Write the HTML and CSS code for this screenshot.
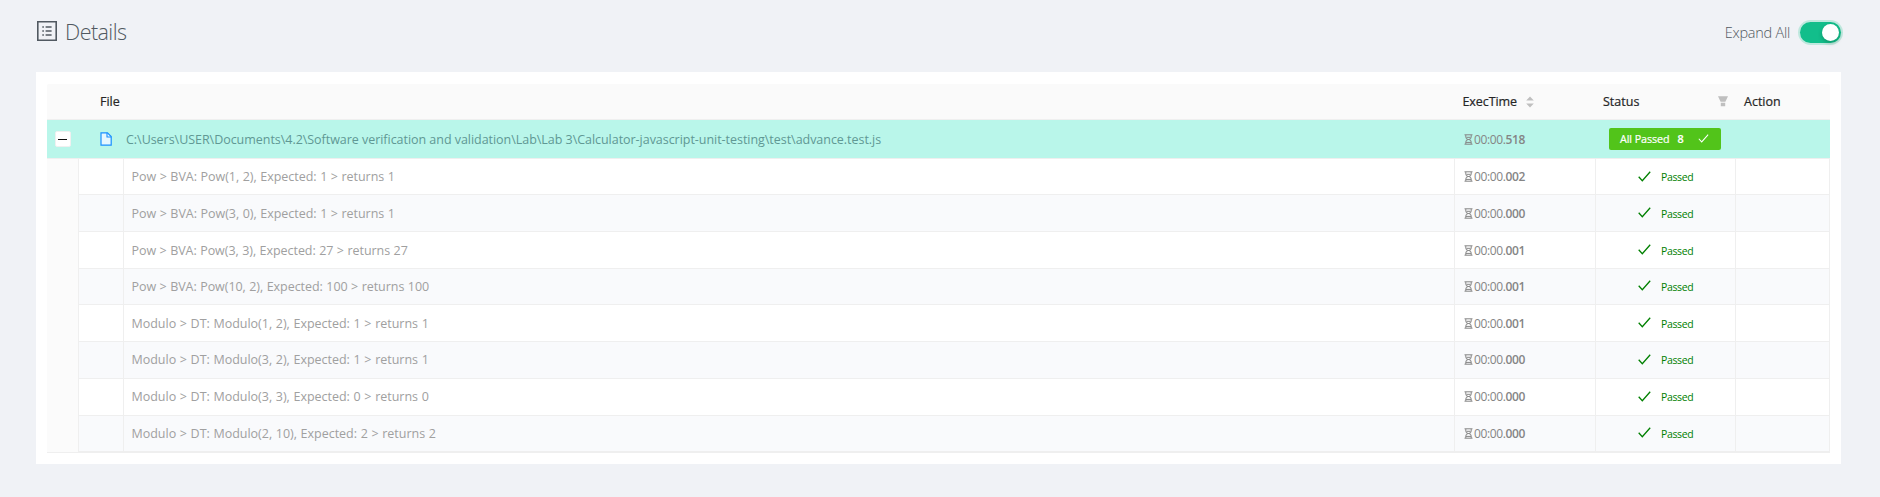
FILE: index.html
```html
<!DOCTYPE html>
<html lang="en">
<head>
<meta charset="utf-8">
<title>Details</title>
<link rel="stylesheet" href="styles.css">
</head>
<body>
<svg class="defs" width="0" height="0">
  <symbol id="check" viewBox="0 0 13 11"><path d="M.7 5.8 4.3 9.7 12.2.8" fill="none" stroke="currentColor" stroke-width="1.3"/></symbol>
  <symbol id="glass" viewBox="0 0 9 11"><path d="M.5 .8h8M.5 10.2h8M1.8 1v2Q1.8 5.5 4.5 5.5Q7.2 5.5 7.2 3V1M1.8 10V8Q1.8 5.5 4.5 5.5Q7.2 5.5 7.2 8v2M2 8.4h5M2.5 3.3h4" fill="none" stroke="currentColor" stroke-width="1"/></symbol>
</svg>
<header class="top">
  <svg class="list-icon" viewBox="0 0 20 20"><path d="M.8.8h18.4v18.4H.8z" fill="none" stroke="currentColor" stroke-width="1.6"/><path d="M5.3 6h1.6M5.3 10h1.6M5.3 14h1.6M8.6 6h6M8.6 10h6M8.6 14h6" stroke="currentColor" stroke-width="1.4"/></svg>
  <h1 class="title">Details</h1>
  <span class="expand">Expand All</span>
  <span class="switch"><span class="knob"></span></span>
</header>
<main class="panel">
  <div class="row head">
    <span class="h-file">File</span>
    <span class="h-exec">ExecTime<svg class="sort" viewBox="0 0 8 12"><path d="M4 .5 7.8 4.5H.2zM4 11.5.2 7.5h7.6z" fill="currentColor"/></svg></span>
    <span class="h-status">Status<svg class="filter" viewBox="0 0 10 11"><path d="M0 .3h10L7.4 5.7H2.6zM2.8 6.7h4.4v3.6H2.8z" fill="currentColor"/></svg></span>
    <span class="h-action">Action</span>
  </div>
  <div class="row group">
    <span class="toggle"></span>
    <svg class="file" viewBox="0 0 12 14"><path d="M1 .8h6.5L11.2 4.5v8.7H1z" fill="#e6f7ff" stroke="#1890ff" stroke-width="1.2"/><path d="M7 .8v4.2h4.2" fill="none" stroke="#1890ff" stroke-width="1.1"/></svg>
    <span class="path">C:\Users\USER\Documents\4.2\Software verification and validation\Lab\Lab 3\Calculator-javascript-unit-testing\test\advance.test.js</span>
    <span class="g-time time"><svg class="glass"><use href="#glass"/></svg>00:00.<b>518</b></span>
    <span class="badge"><span class="b-text">All Passed</span><span class="b-num">8</span><svg class="b-check" viewBox="0 0 13 11"><use href="#check"/></svg></span>
  </div>
  <div class="nested">
    <div class="test"><span></span><span class="name">Pow &gt; BVA: Pow(1, 2), Expected: 1 &gt; returns 1</span><span class="time"><svg class="glass"><use href="#glass"/></svg>00:00.<b>002</b></span><span class="passed"><svg class="check"><use href="#check"/></svg><em>Passed</em></span><span></span></div>
    <div class="test"><span></span><span class="name">Pow &gt; BVA: Pow(3, 0), Expected: 1 &gt; returns 1</span><span class="time"><svg class="glass"><use href="#glass"/></svg>00:00.<b>000</b></span><span class="passed"><svg class="check"><use href="#check"/></svg><em>Passed</em></span><span></span></div>
    <div class="test"><span></span><span class="name">Pow &gt; BVA: Pow(3, 3), Expected: 27 &gt; returns 27</span><span class="time"><svg class="glass"><use href="#glass"/></svg>00:00.<b>001</b></span><span class="passed"><svg class="check"><use href="#check"/></svg><em>Passed</em></span><span></span></div>
    <div class="test"><span></span><span class="name">Pow &gt; BVA: Pow(10, 2), Expected: 100 &gt; returns 100</span><span class="time"><svg class="glass"><use href="#glass"/></svg>00:00.<b>001</b></span><span class="passed"><svg class="check"><use href="#check"/></svg><em>Passed</em></span><span></span></div>
    <div class="test"><span></span><span class="name">Modulo &gt; DT: Modulo(1, 2), Expected: 1 &gt; returns 1</span><span class="time"><svg class="glass"><use href="#glass"/></svg>00:00.<b>001</b></span><span class="passed"><svg class="check"><use href="#check"/></svg><em>Passed</em></span><span></span></div>
    <div class="test"><span></span><span class="name">Modulo &gt; DT: Modulo(3, 2), Expected: 1 &gt; returns 1</span><span class="time"><svg class="glass"><use href="#glass"/></svg>00:00.<b>000</b></span><span class="passed"><svg class="check"><use href="#check"/></svg><em>Passed</em></span><span></span></div>
    <div class="test"><span></span><span class="name">Modulo &gt; DT: Modulo(3, 3), Expected: 0 &gt; returns 0</span><span class="time"><svg class="glass"><use href="#glass"/></svg>00:00.<b>000</b></span><span class="passed"><svg class="check"><use href="#check"/></svg><em>Passed</em></span><span></span></div>
    <div class="test"><span></span><span class="name">Modulo &gt; DT: Modulo(2, 10), Expected: 2 &gt; returns 2</span><span class="time"><svg class="glass"><use href="#glass"/></svg>00:00.<b>000</b></span><span class="passed"><svg class="check"><use href="#check"/></svg><em>Passed</em></span><span></span></div>
  </div>
</main>
</body>
</html>
```

FILE: styles.css
```css
* { box-sizing: border-box; }
body { margin: 0; height: 497px; overflow: hidden; background: #f0f2f6; font-family: "Open Sans", "Noto Sans", sans-serif; font-size: 12.5px; color: #999; white-space: nowrap; }
svg { flex: none; display: block; }
.defs { position: absolute; }
.top { height: 72px; padding: 0 39px 8px 37px; display: flex; align-items: center; color: #515961; }
.list-icon { width: 20px; height: 20px; margin-top: -2px; }
.title { margin: 0 auto 0 8px; font-size: 21.5px; line-height: 30px; font-weight: 300; letter-spacing: -.55px; }
.expand { font-size: 14.5px; font-weight: 300; margin-right: 10px; letter-spacing: -.25px; }
.switch { width: 41px; height: 21px; border-radius: 11px; background: #12be8b; box-shadow: 0 0 0 2px #bfe8de; padding: 2px; display: flex; justify-content: flex-end; }
.knob { width: 17px; height: 17px; border-radius: 50%; background: #fff; box-shadow: 0 2px 4px rgba(0,35,11,.25); }
.panel { width: 1805px; height: 392px; margin-left: 36px; padding: 12px 11px 11px; background: #fff; }
.row { display: grid; align-items: center; }
.head { height: 36px; grid-template-columns: 53px 1362.5px 140.5px 141px 86px; background: #fafafa; border-bottom: 1px solid #efefef; color: #262626; font-weight: 500; -webkit-text-stroke: .2px #262626; border-radius: 2px 2px 0 0; }
.h-file { grid-column: 2; }
.h-exec, .h-status { display: flex; align-items: center; }
.h-exec { letter-spacing: -.08px; }
.sort { width: 8px; height: 12px; margin-left: 9px; margin-top: 1px; color: #bfbfbf; }
.filter { width: 10px; height: 11px; margin-left: auto; margin-right: 16px; color: #bfbfbf; }
.group { height: 39px; grid-template-columns: 8px 45px 26px 1337px 146px 112px; background: #b9f6ea; border-bottom: 1px solid #efefef; color: #609894; }
.path { letter-spacing: -.038px; }
.toggle { grid-column: 2; width: 16px; height: 16px; background: #fff; border: 1px solid #f0f0f0; border-radius: 2px; display: flex; align-items: center; padding-left: 2px; }
.toggle::before { content: ""; width: 9px; height: 1px; background: #111; }
.file { width: 12px; height: 14px; margin-top: -1px; }
.time { display: flex; align-items: center; color: #858585; font-size: 12px; letter-spacing: -.38px; font-weight: 400; }
.time b { font-weight: 600; }
.glass { width: 9px; height: 11px; margin: 0 1px 0 1px; }
.badge { height: 22px; margin-top: -1px; background: #52c41a; border-radius: 2px; color: #fff; display: flex; align-items: center; padding: 0 12px 0 11px; font-size: 10.8px; font-weight: 500; -webkit-text-stroke: .2px #fff; letter-spacing: -.1px; }
.b-num { margin-left: 8px; font-weight: 600; }
.b-check { width: 11px; height: 9px; margin-left: auto; }
.nested { display: grid; grid-template-rows: 36px repeat(7, 36.75px); padding-left: 31px; background: #fbfbfb; border-bottom: 1px solid #efefef; }
.test { display: grid; grid-template-columns: 45px 1332px 141px 140px 94px; background: #fff; }
.test:nth-child(even) { background: #f9fafc; }
.test > span { border-right: 1px solid #efefef; border-bottom: 1px solid #efefef; display: flex; align-items: center; }
.test > span:first-child { border-left: 1px solid #efefef; margin-right: -1px; }
.test .name { padding-left: 8.5px; color: #a0a0a0; border-left: 0; word-spacing: .3px; letter-spacing: -.02px; }
.test:nth-child(3) .name, .test:nth-child(4) .name { letter-spacing: -.05px; }
.test:nth-child(n+5) .name { word-spacing: .45px; }
.test:nth-child(n+2):nth-child(-n+3) > span { padding-top: 1px; }
.test .time { padding-left: 8px; }
.passed { color: green; padding-left: 42px; }
.passed em { font-style: normal; font-size: 10.5px; letter-spacing: -.38px; margin-left: 10px; padding-top: 1px; }
.check { width: 13px; height: 11px; margin-top: -1px; }
```
